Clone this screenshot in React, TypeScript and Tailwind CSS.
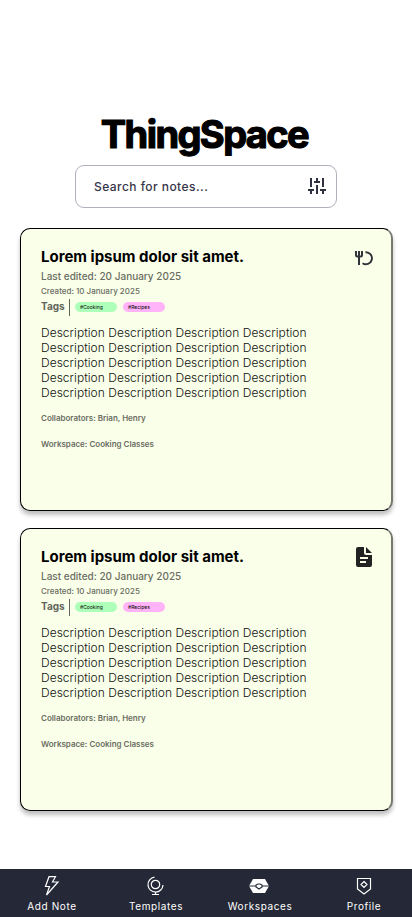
import React from "react";

function Sliders() {
  return (
    <svg width="18" height="16" viewBox="0 0 18 16" fill="none" stroke="#2f3040" strokeWidth="2">
      <path d="M3 0v9M3 11v5M0 12h6M9 0v3M9 7v9M6 4h6M15 0v9M15 11v5M12 12h6" />
    </svg>
  );
}

function Meal() {
  return (
    <svg width="18" height="15" viewBox="0 0 18 15" fill="none" stroke="#30343a" strokeWidth="2">
      <path d="M1 0v4q0 1.500 1.500 1.500h3Q7 5.500 7 4V0M4 0v14" />
      <path d="M10.500 1.300A6 6 0 1 1 7.500 12.200" strokeWidth="1.900" />
    </svg>
  );
}

function Document() {
  return (
    <svg width="16" height="20" viewBox="0 0 16 20">
      <path fill="#222" d="M2 0h6v6q0 2 2 2h6v10q0 2-2 2H2q-2 0-2-2V2Q0 0 2 0ZM10 0l6 6h-6Z" />
      <path d="M4 11h8M4 15h6" stroke="#fafee9" strokeWidth="2" />
    </svg>
  );
}

function Note({ icon }: { icon: React.ReactNode }) {
  return (
    <article className="flex h-[283px] w-[373px] justify-between rounded-[10px] border border-r-2 border-black border-r-[#777970] bg-[#faffe9] pt-[18px] pr-[18px] pl-5 shadow-[0_4px_4px_rgba(0,0,0,0.25)]">
      <div className="flex flex-col whitespace-nowrap">
        <h2 className="h-5 text-[15px] leading-5 font-bold">Lorem ipsum dolor sit amet.</h2>
        <p className="h-[18px] text-[10px] leading-[19px] font-medium text-[#6a6d63]">Last edited: 20 January 2025</p>
        <p className="h-3 text-[8px] leading-3 font-medium text-[#6a6d63]">Created: 10 January 2025</p>
        <div className="flex h-5 items-center">
          <span className="mb-px w-7 text-[10px] font-bold text-[#62655b]">Tags</span>
          <span className="mt-px mr-[5px] h-[17px] w-px bg-[#62655b]" />
          <span className="mr-[6px] flex h-[10px] w-[42px] items-center rounded-full bg-[#aeffb9] pl-[5px] text-[5px] leading-none">#Cooking</span>
          <span className="flex h-[10px] w-[42px] items-center rounded-full bg-[#ffb3f8] pl-[5px] text-[5px] leading-none">#Recipes</span>
        </div>
        <div className="mt-2 text-[12px] leading-[15px] font-light tracking-[0.03px] text-[#111]">
          {[1, 2, 3, 4, 5].map((n) => (
            <p key={n}>Description Description Description Description</p>
          ))}
        </div>
        <p className="mt-[12px] text-[8px] leading-3 font-semibold tracking-[-0.01px] text-[#6a6d63]">Collaborators: Brian, Henry</p>
        <p className="mt-[14px] text-[8px] leading-3 font-semibold tracking-[-0.01px] text-[#6a6d63]">Workspace: Cooking Classes</p>
      </div>
      {icon}
    </article>
  );
}

const items = [
  {
    label: "Add Note",
    icon: <path d="M7 .7h6.500L10.500 6H16L4.500 19l3-8.500H3.500Z" />,
  },
  {
    label: "Templates",
    icon: <><circle cx="9.500" cy="8.500" r="4.200" /><path d="M8.500 1.200A7.500 7.500 0 1 0 17 9M9.500 16v3M6 18.500h7" /></>,
  },
  {
    label: "Workspaces",
    icon: <><path d="M3 3h12l4 7-4 7H3l-4-7Z" fill="white" stroke="none" /><path d="M-1 10h7M12 10h7M6 9v2l3 2 3-2V9l-2-1H8Z" stroke="#252836" /></>,
  },
  {
    label: "Profile",
    icon: <path d="M3.500 2.500h13v10.500L10 18l-6.500-5ZM10 5.500l3 3-3 3-3-3Z" />,
  },
];

export default function App() {
  return (
    <main className="flex h-[917px] w-[412px] flex-col overflow-hidden bg-white font-['Inter',sans-serif] text-black">
      <header className="flex flex-col items-center pt-[109px]">
        <h1 className="mr-[3px] h-14 text-[38px] leading-[50px] font-bold tracking-[-1.600px] [-webkit-text-stroke:1.2px_black]">ThingSpace</h1>
        <div className="flex h-[43px] w-[262px] items-center justify-between rounded-[9px] border border-[#b0b1bd] pr-[10px] pl-[18px]">
          <span className="text-[12px] font-medium tracking-[0.45px] text-[#363449]">Search for notes...</span>
          <span className="-mt-px"><Sliders /></span>
        </div>
      </header>
      <section className="mt-5 ml-5 flex flex-col gap-[17px]">
        <Note icon={<span className="mt-1"><Meal /></span>} />
        <Note icon={<span className="mr-px"><Document /></span>} />
      </section>
      <nav className="mt-auto flex h-12 w-[416px] shrink-0 bg-[#252836] text-white">
        {items.map((item) => (
          <div key={item.label} className="flex w-1/4 flex-col items-center pt-[7px]">
            <svg className="overflow-visible" width="20" height="20" viewBox="0 0 20 20" fill="none" stroke="white" strokeWidth="1.200">{item.icon}</svg>
            <span className="mt-[3px] text-[10px] leading-[15px] tracking-[0.6px]">{item.label}</span>
          </div>
        ))}
      </nav>
    </main>
  );
}
